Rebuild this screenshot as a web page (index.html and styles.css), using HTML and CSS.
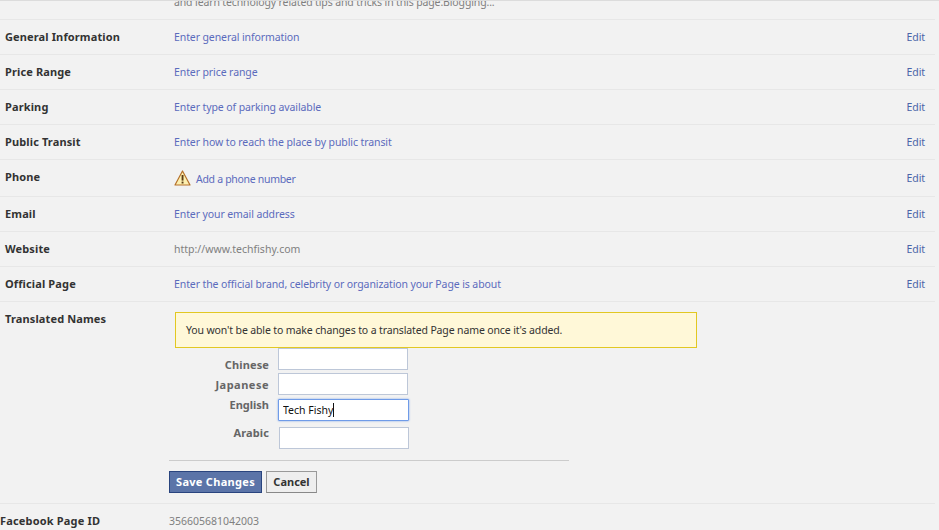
FILE: index.html
```html
<!DOCTYPE html>
<html lang="en">
  <head>
    <meta charset="UTF-8" />
    <meta name="viewport" content="width=device-width, initial-scale=1.0" />
    <title>Page Info</title>
    <link rel="stylesheet" href="styles.css">
  </head>
  <body>
    <div class="info-list">
      <div class="row row-clipped">
        <div class="row-label"></div>
        <div class="row-value muted"><span class="clipped-text">and learn technology related tips and tricks in this page.Blogging...</span></div>
      </div>
      <div class="row">
        <div class="row-label">General Information</div>
        <div class="row-value"><a href="#">Enter general information</a></div>
        <a class="row-edit" href="#">Edit</a>
      </div>
      <div class="row">
        <div class="row-label">Price Range</div>
        <div class="row-value"><a href="#">Enter price range</a></div>
        <a class="row-edit" href="#">Edit</a>
      </div>
      <div class="row">
        <div class="row-label">Parking</div>
        <div class="row-value"><a href="#">Enter type of parking available</a></div>
        <a class="row-edit" href="#">Edit</a>
      </div>
      <div class="row">
        <div class="row-label">Public Transit</div>
        <div class="row-value"><a href="#">Enter how to reach the place by public transit</a></div>
        <a class="row-edit" href="#">Edit</a>
      </div>
      <div class="row row-phone">
        <div class="row-label">Phone</div>
        <div class="row-value phone-value">
          <svg class="warn-icon" width="17" height="16" viewBox="0 0 17 16">
            <path d="M8.5 1 L16 15 H1 Z" fill="#fdf0b0" stroke="#b5712a" stroke-width="1.2" stroke-linejoin="round" />
            <rect x="7.6" y="5" width="1.9" height="5.6" fill="#5a3a12" />
            <rect x="7.6" y="11.6" width="1.9" height="1.9" fill="#5a3a12" />
          </svg>
          <a href="#">Add a phone number</a>
        </div>
        <a class="row-edit" href="#">Edit</a>
      </div>
      <div class="row">
        <div class="row-label">Email</div>
        <div class="row-value"><a href="#">Enter your email address</a></div>
        <a class="row-edit" href="#">Edit</a>
      </div>
      <div class="row">
        <div class="row-label">Website</div>
        <div class="row-value muted">http://www.techfishy.com</div>
        <a class="row-edit" href="#">Edit</a>
      </div>
      <div class="row">
        <div class="row-label">Official Page</div>
        <div class="row-value"><a href="#">Enter the official brand, celebrity or organization your Page is about</a></div>
        <a class="row-edit" href="#">Edit</a>
      </div>

      <div class="names-row">
        <div class="row-label names-label">Translated Names</div>
        <div class="names-body">
          <div class="notice">You won't be able to make changes to a translated Page name once it's added.</div>
          <div class="name-field field-chinese">
            <label class="name-label">Chinese</label>
            <input class="name-input" type="text" />
          </div>
          <div class="name-field field-japanese">
            <label class="name-label">Japanese</label>
            <input class="name-input" type="text" />
          </div>
          <div class="name-field field-english">
            <label class="name-label">English</label>
            <div class="input-wrap">
              <input class="name-input focused" type="text" value="Tech Fishy" />
              <span class="caret"></span>
            </div>
          </div>
          <div class="name-field field-arabic">
            <label class="name-label">Arabic</label>
            <input class="name-input" type="text" />
          </div>
          <div class="form-actions">
            <button class="btn btn-save">Save Changes</button>
            <button class="btn btn-cancel">Cancel</button>
          </div>
        </div>
      </div>

      <div class="id-row">
        <div class="id-label">Facebook Page ID</div>
        <div class="id-value">356605681042003</div>
      </div>
    </div>
  </body>
</html>
```

FILE: styles.css
```css
* {
  margin: 0;
  padding: 0;
  box-sizing: border-box;
}

html,
body {
  height: 530px;
  overflow: hidden;
}

body {
  font-family: "Noto Sans", sans-serif;
  font-size: 10.5px;
  letter-spacing: -0.1px;
  color: #333;
  background: #f2f2f2;
}

a {
  color: #5b6bbd;
  text-decoration: none;
}

.info-list {
  width: 939px;
  border-top: 1px solid #dcdcdc;
}

.row {
  display: flex;
  align-items: center;
  width: 935px;
  height: 35px;
  padding: 0 0 2px 5px;
  border-bottom: 1px solid #e7e7e7;
}

.row-clipped {
  height: 19px;
  padding-bottom: 0;
  align-items: flex-start;
  overflow: hidden;
}

.clipped-text {
  display: block;
  margin-top: -8px;
  letter-spacing: -0.13px;
}

.row-phone {
  height: 37px;
}

.row-label {
  flex: 0 0 169px;
  font-size: 11px;
  font-weight: bold;
  letter-spacing: 0.13px;
  color: #333;
}

.row-value {
  flex: 1;
  margin-top: 2px;
}

.muted {
  letter-spacing: 0;
  color: #808080;
}

.phone-value {
  display: flex;
  align-items: center;
  gap: 5px;
  padding-top: 2px;
  letter-spacing: -0.3px;
}

.warn-icon {
  margin-top: -3px;
}

.row-edit {
  margin: 2px 10px 0 0;
  color: #4a64a8;
}

.row-phone .row-label {
  margin-bottom: 2px;
}

.names-row {
  display: flex;
  width: 935px;
  height: 202px;
  padding-left: 5px;
  border-bottom: 1px solid #e7e7e7;
}

.names-label {
  padding-top: 9px;
}

.names-body {
  width: 400px;
}

.notice {
  width: 522px;
  height: 36px;
  margin: 10px 0 0 1px;
  padding-left: 10px;
  line-height: 34px;
  letter-spacing: -0.13px;
  color: #333;
  background: #fff8d8;
  border: 1px solid #e2c822;
}

.name-field {
  display: flex;
  align-items: center;
  height: 22px;
}

.name-label {
  width: 95px;
  margin-right: 9px;
  text-align: right;
  font-size: 11px;
  font-weight: bold;
  letter-spacing: 0.13px;
  color: #666;
}

.name-input {
  width: 130px;
  height: 22px;
  padding: 0 4px;
  font: 10.5px "Noto Sans", sans-serif;
  color: #111;
  background: #fff;
  border: 1px solid #bdc7d8;
  outline: none;
}

.input-wrap {
  position: relative;
  display: flex;
}

.name-input.focused {
  width: 131px;
  border: 1px solid #6f9be8;
  border-radius: 1px;
  box-shadow: 0 0 2px #6f9be8;
}

.caret {
  position: absolute;
  left: 55px;
  top: 4px;
  width: 1px;
  height: 14px;
  background: #111;
}

.field-chinese .name-label {
  padding-top: 10px;
}

.field-japanese {
  margin-top: 3px;
}

.field-japanese .name-label {
  letter-spacing: 0.5px;
}

.field-english {
  margin-top: 4px;
}

.field-english .name-label {
  padding-bottom: 12px;
  letter-spacing: 0;
}

.field-arabic {
  margin-top: 6px;
}

.field-arabic .name-input {
  margin-left: 1px;
}

.field-arabic .name-label {
  padding-bottom: 12px;
}

.form-actions {
  display: flex;
  gap: 4px;
  width: 400px;
  margin: 11px 0 0 -5px;
  padding-top: 10px;
  border-top: 1px solid #cccccc;
}

.btn {
  height: 22px;
  padding-bottom: 2px;
  font: bold 11px "Noto Sans", sans-serif;
  cursor: pointer;
}

.btn-save {
  width: 93px;
  letter-spacing: 0.3px;
  color: #fff;
  background: #5b74a8;
  border: 1px solid #29447e;
}

.btn-cancel {
  width: 51px;
  color: #333;
  background: #eeeeee;
  border: 1px solid #999999;
  border-bottom-color: #888888;
}

.id-row {
  display: flex;
  align-items: center;
  height: 35px;
  padding-bottom: 2px;
}

.id-label {
  flex: 0 0 169px;
  font-size: 11px;
  font-weight: bold;
  letter-spacing: 0.17px;
  color: #333;
}

.id-value {
  letter-spacing: 0;
  color: #808080;
}
```
